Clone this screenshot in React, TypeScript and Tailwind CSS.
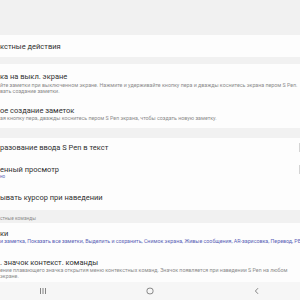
import React from 'react';

const font = { fontFamily: 'Roboto, "Noto Sans", sans-serif' };

function Title({ children }: { children: React.ReactNode }) {
  return <p className="text-[7.5px] leading-[9px] text-[#303030] whitespace-nowrap">{children}</p>;
}

function Desc({ children, blue }: { children: React.ReactNode; blue?: boolean }) {
  return (
    <p
      className={
        'text-[5.3px] leading-[6px] whitespace-nowrap ' + (blue ? 'text-[#5a62b6]' : 'text-[#8c8c8c]')
      }
    >
      {children}
    </p>
  );
}

export default function App() {
  return (
    <div style={font} className="w-[300px] h-[300px] overflow-hidden bg-[#f1f1f1] flex flex-col">
      <div className="h-[35px] shrink-0" />

      <div className="h-[22px] shrink-0 bg-[#fdfdfd] flex items-center">
        <Title>кстные действия</Title>
      </div>

      <div className="h-[7px] shrink-0" />

      <div className="h-[64px] shrink-0 bg-[#fdfdfd] pt-[7.5px] overflow-hidden">
        <Title>ка на выкл. экране</Title>
        <div className="mt-[1px]">
          <Desc>йте заметки при выключенном экране. Нажмите и удерживайте кнопку пера и дважды коснитесь экрана пером S Pen.</Desc>
          <Desc>вать создание заметки.</Desc>
        </div>
        <div className="mt-[12px]">
          <Title>ое создание заметок</Title>
          <Desc>ая кнопку пера, дважды коснитесь пером S Pen экрана, чтобы создать новую заметку.</Desc>
        </div>
      </div>

      <div className="h-[10px] shrink-0" />

      <div className="shrink-0 bg-[#fdfdfd] flex flex-col">
        <div className="h-[18px] flex items-center justify-between">
          <Title>разование ввода S Pen в текст</Title>
          <div className="w-px h-[9px] bg-[#d4d4d4]" />
        </div>
        <div className="h-[28px] pt-[9px] flex justify-between">
          <div>
            <Title>енный просмотр</Title>
            <p className="text-[4.5px] leading-[5px] text-[#5a62b6] whitespace-nowrap">но</p>
          </div>
          <div className="w-px h-[9px] bg-[#d4d4d4]" />
        </div>
        <div className="h-[26px] flex items-center">
          <Title>ывать курсор при наведении</Title>
        </div>
      </div>

      <div className="h-[13px] shrink-0 pt-[6px]">
        <p className="text-[4.8px] leading-[6px] text-[#8c8c8c] whitespace-nowrap">стные команды</p>
      </div>

      <div className="h-[59px] shrink-0 bg-[#fdfdfd] pt-[6px] overflow-hidden">
        <Title>ки</Title>
        <Desc blue>
          и заметка, Показать все заметки, Выделить и сохранить, Снимок экрана, Живые сообщения, AR-зарисовка, Перевод, PENUP
        </Desc>
        <div className="mt-[13.5px]">
          <Title>. значок контекст. команды</Title>
          <div className="[&>p]:leading-[6.5px]">
            <Desc>ение плавающего значка открытия меню контекстных команд. Значок появляется при наведении S Pen на любом</Desc>
            <Desc>экране.</Desc>
          </div>
        </div>
      </div>

      <div className="flex-1 bg-[#f6f6f6] flex items-center justify-between px-[38px]">
        <svg width="10" height="8" viewBox="0 0 10 8">
          <path d="M2.5 1v6M5 1v6M7.5 1v6" stroke="#777" strokeWidth="0.9" />
        </svg>
        <svg width="10" height="8" viewBox="0 0 10 8">
          <rect x="2" y="1.2" width="6" height="5.6" rx="2.2" fill="none" stroke="#777" strokeWidth="0.9" />
        </svg>
        <svg width="10" height="8" viewBox="0 0 10 8">
          <path d="M6 1.2L3.4 4L6 6.8" fill="none" stroke="#777" strokeWidth="0.9" />
        </svg>
      </div>
    </div>
  );
}
